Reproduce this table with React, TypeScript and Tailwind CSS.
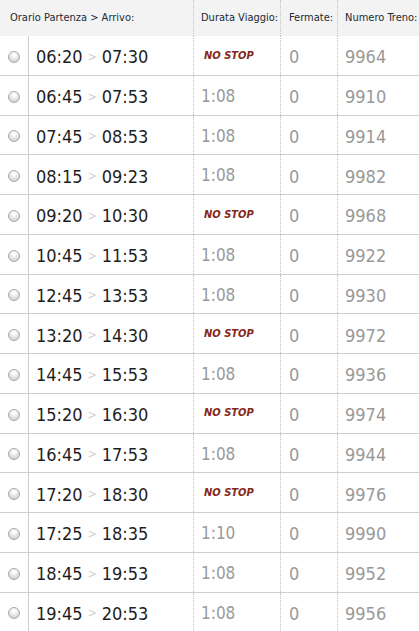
const trains = [
  { dep: "06:20", arr: "07:30", dur: null, stops: 0, num: "9964" },
  { dep: "06:45", arr: "07:53", dur: "1:08", stops: 0, num: "9910" },
  { dep: "07:45", arr: "08:53", dur: "1:08", stops: 0, num: "9914" },
  { dep: "08:15", arr: "09:23", dur: "1:08", stops: 0, num: "9982" },
  { dep: "09:20", arr: "10:30", dur: null, stops: 0, num: "9968" },
  { dep: "10:45", arr: "11:53", dur: "1:08", stops: 0, num: "9922" },
  { dep: "12:45", arr: "13:53", dur: "1:08", stops: 0, num: "9930" },
  { dep: "13:20", arr: "14:30", dur: null, stops: 0, num: "9972" },
  { dep: "14:45", arr: "15:53", dur: "1:08", stops: 0, num: "9936" },
  { dep: "15:20", arr: "16:30", dur: null, stops: 0, num: "9974" },
  { dep: "16:45", arr: "17:53", dur: "1:08", stops: 0, num: "9944" },
  { dep: "17:20", arr: "18:30", dur: null, stops: 0, num: "9976" },
  { dep: "17:25", arr: "18:35", dur: "1:10", stops: 0, num: "9990" },
  { dep: "18:45", arr: "19:53", dur: "1:08", stops: 0, num: "9952" },
  { dep: "19:45", arr: "20:53", dur: "1:08", stops: 0, num: "9956" },
]

const cols = "grid grid-cols-[29px_164px_87px_57px_82px]"
const dotted = "border-l border-dotted border-[#c4c4c4]"

export default function App() {
  return (
    <main
      className="w-[419px] h-[631px] overflow-hidden bg-white"
      style={{ fontFamily: '"DejaVu Sans Condensed", "DejaVu Sans", sans-serif' }}
    >
      {/* header */}
      <div className={`${cols} h-[36px] bg-[#f3f3f3] text-[11px] text-[#222a33]`}>
        <div className="col-span-2 flex items-center pl-[10px]">Orario Partenza &gt; Arrivo:</div>
        <div className={`${dotted} flex items-center pl-[7px]`}>Durata Viaggio:</div>
        <div className={`${dotted} flex items-center pl-[8px]`}>Fermate:</div>
        <div className={`${dotted} flex items-center pl-[7px]`}>Numero Treno:</div>
      </div>

      {/* rows */}
      {trains.map((t) => (
        <div key={t.num} className={`${cols} h-[39.75px] border-b border-[#cfcfcf]`}>
          <div className="flex items-center justify-center border-r border-[#cfcfcf] pt-[3px]">
            <span className="block w-[12px] h-[12px] rounded-full border border-[#a9a9a9] bg-[radial-gradient(circle_at_50%_30%,#ffffff_10%,#c4c4c4)]" />
          </div>
          <div className="flex items-center pl-[7px] pt-[3px] text-[18px] text-[#1e1e1e]">
            <span>{t.dep}</span>
            <span className="mx-[5px] text-[12px] text-[#cfcfcf]">&gt;</span>
            <span>{t.arr}</span>
          </div>
          <div className={`${dotted} flex items-center pl-[7px] pt-[3px]`}>
            {t.dur ? (
              <span className="text-[17px] text-[#999999]">{t.dur}</span>
            ) : (
              <span className="text-[11px] font-bold italic text-[#85281a] pl-[3px] -mt-[2px]">NO STOP</span>
            )}
          </div>
          <div className={`${dotted} flex items-center pl-[8px] pt-[3px] text-[18px] text-[#999999]`}>{t.stops}</div>
          <div className={`${dotted} flex items-center pl-[7px] pt-[3px] text-[18px] text-[#999999]`}>{t.num}</div>
        </div>
      ))}
    </main>
  )
}
